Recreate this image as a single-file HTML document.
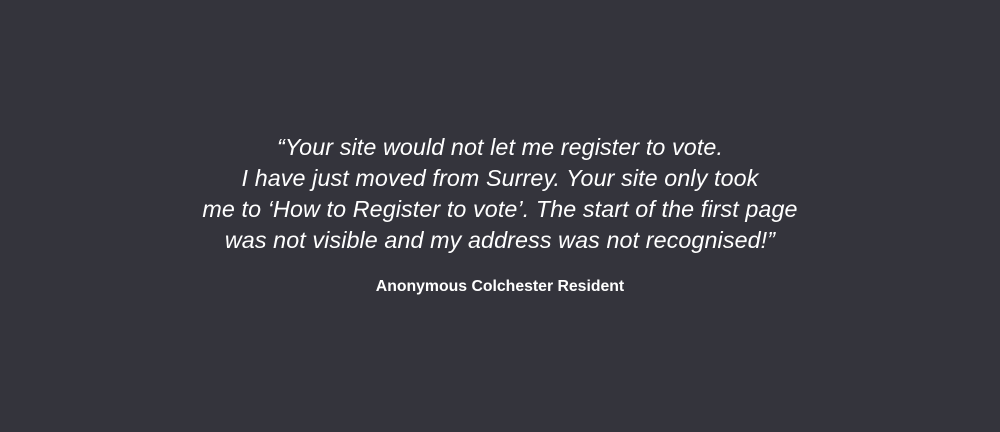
<!DOCTYPE html>
<html><head><style>
html,body{margin:0;padding:0;}
body{width:1000px;height:432px;background:#34343c;font-family:"Liberation Sans",sans-serif;color:#fff;position:relative;overflow:hidden;}
.q{position:absolute;top:132px;left:0;width:1000px;text-align:center;font-style:italic;font-size:23.3px;line-height:31px;white-space:nowrap;letter-spacing:0.1px;}
.a{position:absolute;top:277px;left:0;width:1000px;text-align:center;font-weight:bold;font-size:15.8px;line-height:19px;}
</style></head><body>
<div class="q">“Your site would not let me register to vote.<br>I have just moved from Surrey. Your site only took<br>me to ‘How to Register to vote’. The start of the first page<br>was not visible and my address was not recognised!”</div>
<div class="a">Anonymous Colchester Resident</div>
</body></html>
